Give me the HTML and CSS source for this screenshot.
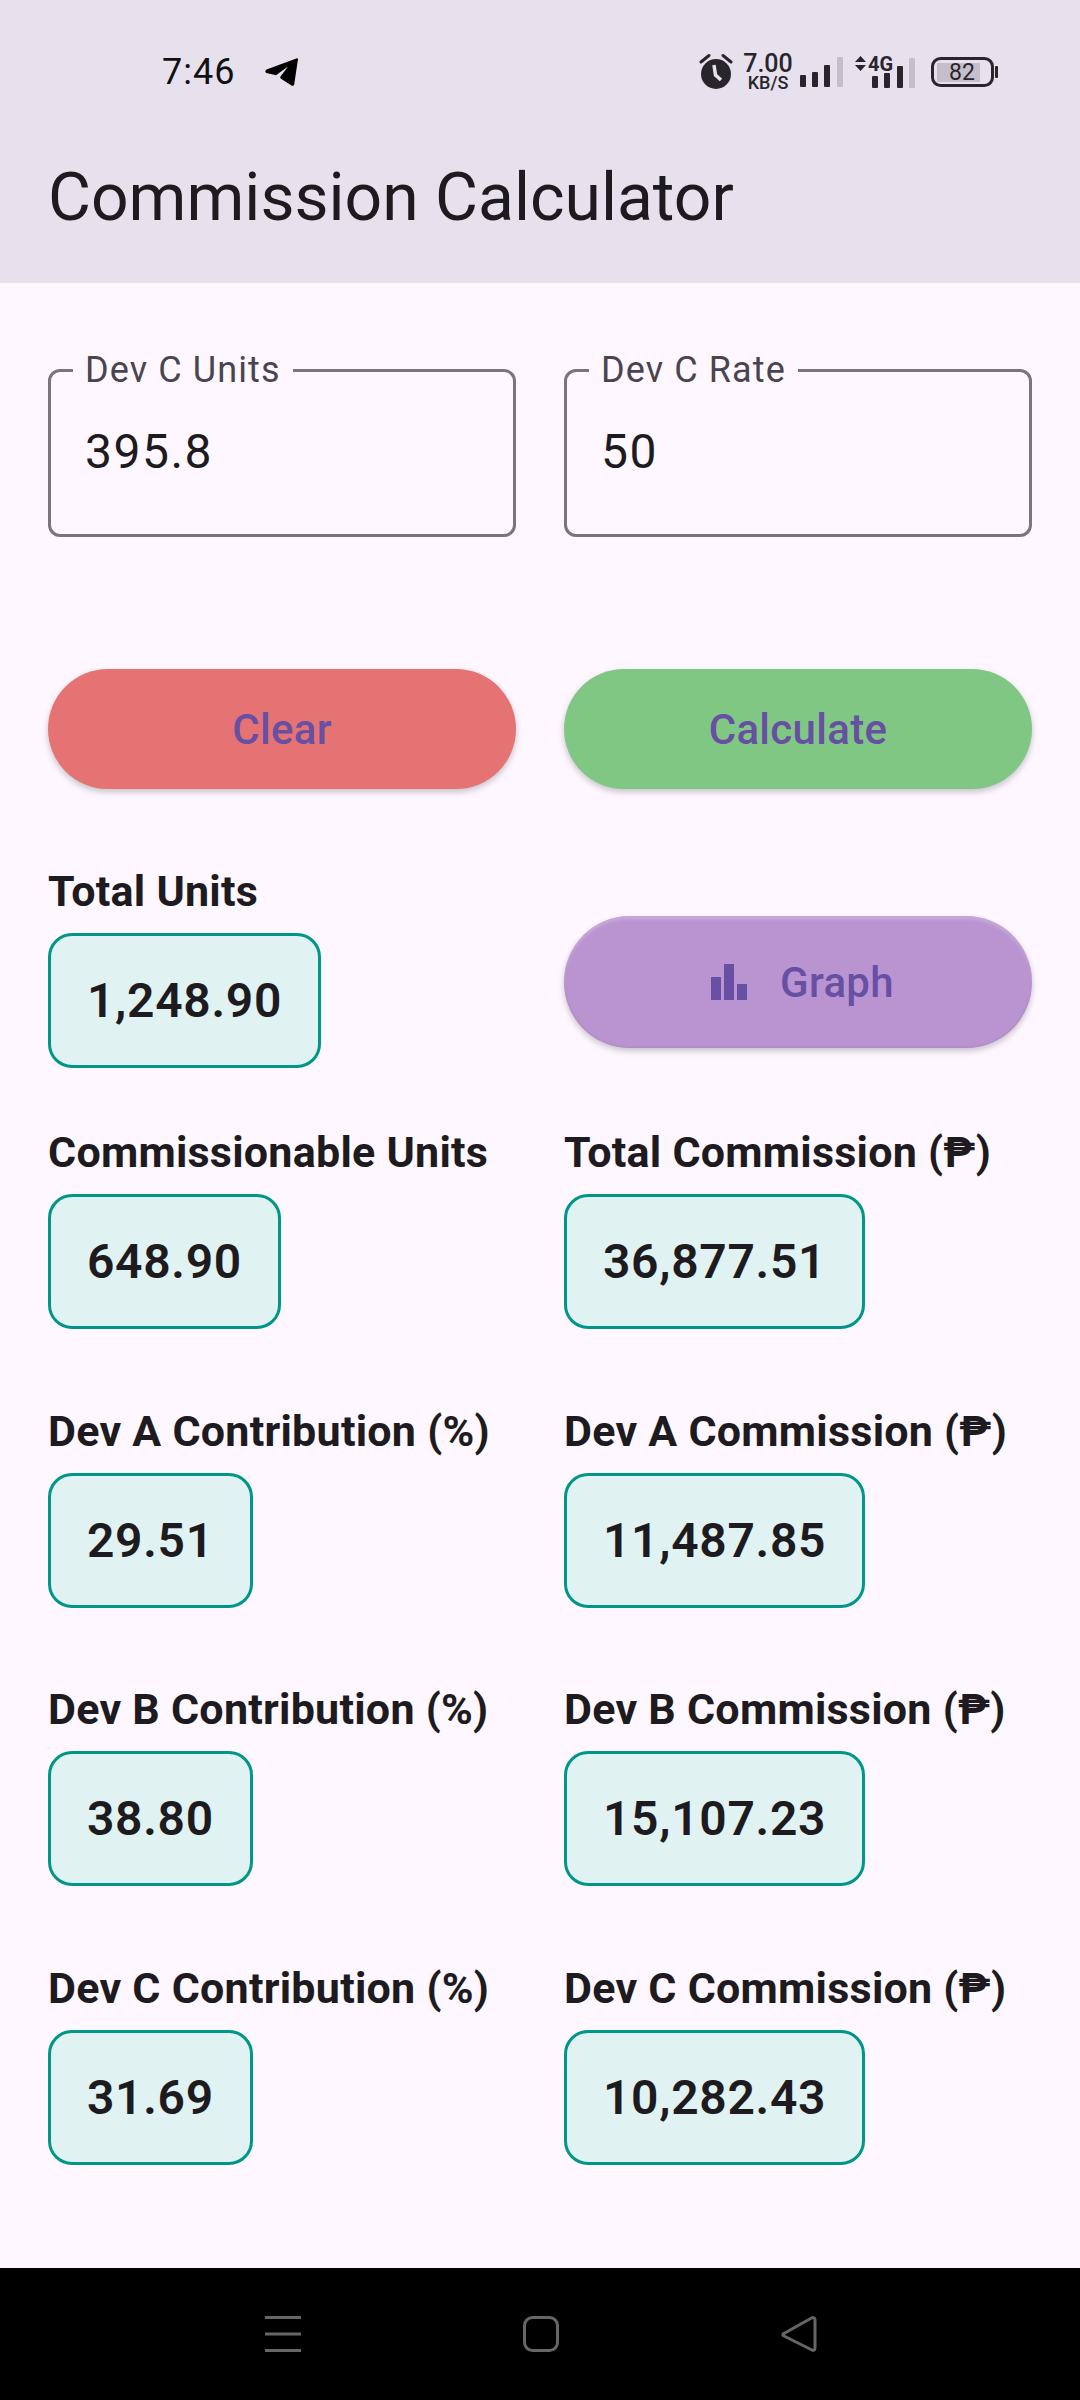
FILE: index.html
```html
<!DOCTYPE html>
<html lang="en">
<head>
<meta charset="utf-8">
<title>Commission Calculator</title>
<link rel="stylesheet" href="styles.css">
</head>
<body>
<div class="screen">
  <header class="appbar">
    <div class="status">
      <div class="status-left">
        <span class="time">7:46</span>
        <svg class="plane" width="33" height="28" viewBox="0 0 33 28"><path d="M32 0.3 L1.5 11.5 C0 12.2 0 14.5 1.5 15 L11 17.3 L23 8.5 L15.5 18.6 C15 19.4 15.2 20.2 16 20.7 L26.5 27.5 C27.6 28.2 29 27.7 29.2 26.5 L33 1.2 C33 0.5 32.6 0.1 32 0.3 Z" fill="#000"/></svg>
      </div>
      <div class="status-right">
        <svg class="alarm" width="34" height="36" viewBox="0 0 34 36"><circle cx="17" cy="21" r="15" fill="#28262c"/><path d="M2 9 L10 2.5 M32 9 L24 2.5" stroke="#28262c" stroke-width="3" stroke-linecap="round"/><path d="M15 12 L16.5 22 L22 27" stroke="#e7e1ee" stroke-width="3.5" fill="none"/></svg>
        <div class="speed"><span class="speed-num">7.00</span><span class="speed-unit">KB/S</span></div>
        <svg class="bars" width="43" height="30" viewBox="0 0 43 30"><rect x="0" y="18" width="6" height="12" rx="1" fill="#28262c"/><rect x="12" y="15" width="6" height="15" rx="1" fill="#28262c"/><rect x="24" y="8" width="6" height="22" rx="1" fill="#28262c"/><rect x="37" y="0" width="6" height="30" rx="1" fill="#c5bfcc"/></svg>
        <svg class="net" width="60" height="38" viewBox="0 0 60 38"><path d="M5.5 6 L11 12 L0 12 Z M0 15 L11 15 L5.5 21 Z" fill="#28262c"/><text x="13" y="21" class="net-text">4G</text><rect x="17" y="26" width="6" height="12" rx="1" fill="#28262c"/><rect x="29" y="23" width="6" height="15" rx="1" fill="#28262c"/><rect x="42" y="16" width="6" height="22" rx="1" fill="#28262c"/><rect x="54" y="8" width="6" height="30" rx="1" fill="#c5bfcc"/></svg>
        <svg class="battery" width="67" height="30" viewBox="0 0 67 30"><rect x="1.5" y="1.5" width="60" height="27" rx="8" fill="none" stroke="#28262c" stroke-width="3"/><rect x="6" y="6" width="43" height="19" fill="#c5bfcc"/><rect x="64" y="9" width="3" height="12" rx="1" fill="#28262c"/><text x="31" y="23" text-anchor="middle" class="batt-text">82</text></svg>
      </div>
    </div>
    <h1 class="title">Commission Calculator</h1>
  </header>

  <main class="content">
    <section class="grid fields">
      <div class="field"><span class="field-label">Dev C Units</span><span class="field-value">395.8</span></div>
      <div class="field"><span class="field-label">Dev C Rate</span><span class="field-value">50</span></div>
    </section>

    <section class="grid actions">
      <button class="btn btn-clear">Clear</button>
      <button class="btn btn-calc">Calculate</button>
    </section>

    <section class="grid row-total">
      <div class="stat"><div class="stat-label">Total Units</div><div class="stat-box">1,248.90</div></div>
      <button class="btn btn-graph">
        <svg width="36" height="36" viewBox="0 0 36 36"><path d="M0 13 H10 V36 H0 Z M13 0 H23 V36 H13 Z M26 20 H36 V36 H26 Z" fill="#6750A4"/></svg>
        <span>Graph</span>
      </button>
    </section>

    <section class="grid stats">
      <div class="stat"><div class="stat-label">Commissionable Units</div><div class="stat-box">648.90</div></div>
      <div class="stat"><div class="stat-label">Total Commission (₱)</div><div class="stat-box">36,877.51</div></div>
      <div class="stat"><div class="stat-label">Dev A Contribution (%)</div><div class="stat-box">29.51</div></div>
      <div class="stat"><div class="stat-label">Dev A Commission (₱)</div><div class="stat-box">11,487.85</div></div>
      <div class="stat"><div class="stat-label">Dev B Contribution (%)</div><div class="stat-box">38.80</div></div>
      <div class="stat"><div class="stat-label">Dev B Commission (₱)</div><div class="stat-box">15,107.23</div></div>
      <div class="stat"><div class="stat-label">Dev C Contribution (%)</div><div class="stat-box">31.69</div></div>
      <div class="stat"><div class="stat-label">Dev C Commission (₱)</div><div class="stat-box">10,282.43</div></div>
    </section>
  </main>

  <nav class="navbar">
    <svg width="36" height="36" viewBox="0 0 36 36"><path d="M0 1.5 H36 M0 18 H36 M0 34.5 H36" stroke="#666" stroke-width="3"/></svg>
    <svg width="36" height="36" viewBox="0 0 36 36"><rect x="1.5" y="1.5" width="33" height="33" rx="8" fill="none" stroke="#666" stroke-width="3"/></svg>
    <svg width="36" height="36" viewBox="0 0 36 36"><path d="M2 18 L31 1.8 Q34 1 34 4 V32 Q34 35 31 34 L2 19.5 Z" fill="none" stroke="#666" stroke-width="3" stroke-linejoin="round"/></svg>
  </nav>
</div>
</body>
</html>
```
FILE: styles.css
```css
* { box-sizing: border-box; }
html, body { margin: 0; padding: 0; }
body { width: 1080px; height: 2400px; font-family: Roboto, "Noto Sans", sans-serif; color: #1D1B20; background: #FEF7FF; }
.screen { display: flex; flex-direction: column; height: 2400px; }

.appbar { height: 283px; background: #E7E1EE; flex: none; }
.status { height: 115px; padding: 53px 82px 0 162px; display: flex; justify-content: space-between; align-items: flex-start; }
.status-left { display: flex; align-items: center; height: 38px; }
.time { font-size: 36px; line-height: 38px; letter-spacing: 1px; color: #111; }
.plane { margin-left: 30px; }
.status-right { display: flex; align-items: flex-start; }
.alarm { flex: none; }
.speed { display: flex; flex-direction: column; align-items: center; margin-left: 10px; width: 50px; }
.speed-num { font-size: 25px; font-weight: 500; line-height: 22px; color: #28262c; }
.speed-unit { font-size: 18px; font-weight: 500; line-height: 16px; color: #28262c; }
.bars { margin-left: 7px; margin-top: 4px; }
.net { margin-left: 12px; margin-top: -3px; }
.net-text { font-family: Roboto, sans-serif; font-size: 20px; font-weight: 700; fill: #28262c; }
.battery { margin-left: 16px; margin-top: 4px; }
.batt-text { font-family: Roboto, sans-serif; font-size: 23px; fill: #28262c; }
.title { margin: -1px 0 0; padding: 0 48px; font-size: 66px; font-weight: 400; line-height: 168px; color: #1D1B20; }

.content { flex: 1; padding: 86px 48px 0; }
.grid { display: grid; grid-template-columns: 1fr 1fr; column-gap: 48px; }

.field { position: relative; height: 168px; border: 3px solid #79747E; border-radius: 12px; padding: 52px 34px 0; }
.field-label { position: absolute; left: 22px; top: -22px; padding: 0 12px; background: #FEF7FF; font-size: 36px; line-height: 40px; letter-spacing: 1.1px; color: #49454F; }
.field-value { font-size: 48px; line-height: 56px; letter-spacing: 1.5px; color: #1D1B20; }

.actions { margin-top: 132px; }
.btn { border: 0; border-radius: 66px; height: 120px; font-family: inherit; font-size: 42px; font-weight: 500; letter-spacing: .3px; color: #6750A4; box-shadow: 0 3px 6px rgba(0,0,0,.22); padding: 0; }
.btn-clear { background: #E57373; }
.btn-calc { background: #81C784; }

.row-total { margin-top: 75px; align-items: start; }
.btn-graph { height: 132px; margin-top: 52px; padding-left: 9px; background: #BA94D1; display: flex; align-items: center; justify-content: center; gap: 33px; box-shadow: 0 3px 6px rgba(0,0,0,.22), inset 0 3px 3px rgba(255,255,255,.25), inset 0 0 3px rgba(120,80,140,.35); }

.stats { margin-top: 57px; row-gap: 74.5px; }
.stat-label { font-size: 43px; font-weight: 700; line-height: 54px; letter-spacing: .25px; white-space: nowrap; margin-bottom: 15px; }
.stat-box { display: table; line-height: 129px; padding: 0 36px; border: 3px solid #009688; border-radius: 24px; background: #E0F2F1; font-size: 48px; font-weight: 600; letter-spacing: .7px; color: #1D1B20; }

.navbar { height: 132px; flex: none; background: #000; display: flex; justify-content: space-between; align-items: flex-start; padding: 48px 263px 0 265px; }
```
